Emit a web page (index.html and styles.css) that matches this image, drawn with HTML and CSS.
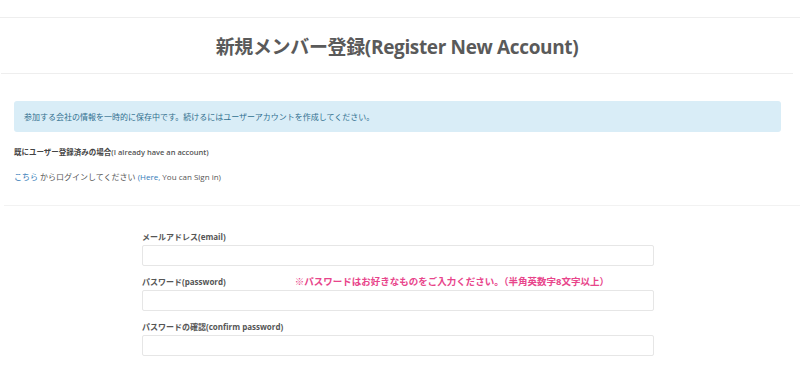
FILE: index.html
```html
<!DOCTYPE html>
<html lang="ja">
<head>
  <meta charset="UTF-8">
  <meta name="viewport" content="width=device-width, initial-scale=1.0">
  <title>新規メンバー登録</title>
  <link rel="stylesheet" href="styles.css">
</head>
<body>
  <div class="top-bar"></div>

  <div class="page-header">
    <h1>新規メンバー登録(Register New Account)</h1>
  </div>

  <main class="container">
    <div class="alert-info">参加する会社の情報を一時的に保存中です。続けるにはユーザーアカウントを作成してください。</div>

    <p class="already">既にユーザー登録済みの場合<span class="en">(I already have an account)</span></p>
    <p class="signin"><a href="#">こちら</a> からログインしてください <a href="#">(Here,</a> You can Sign in)</p>
  </main>

  <hr class="divider">

  <form class="register-form">
    <div class="field">
      <label for="email">メールアドレス(email)</label>
      <input type="email" id="email">
    </div>
    <div class="field">
      <div class="label-row">
        <label for="password">パスワード(password)</label>
        <span class="note">※パスワードはお好きなものをご入力ください。（半角英数字8文字以上）</span>
      </div>
      <input type="password" id="password">
    </div>
    <div class="field">
      <label for="confirm">パスワードの確認(confirm password)</label>
      <input type="password" id="confirm">
    </div>
  </form>
</body>
</html>
```

FILE: styles.css
```css
body {
  font-family: 'Open Sans', 'Noto Sans CJK JP', sans-serif;
  margin: 0;
  padding: 0;
  background-color: #fff;
  color: #555;
}
.top-bar {
  height: 17px;
  border-bottom: 1px solid #eee;
}
.page-header {
  height: 55px;
  margin: 0 7px 0 1px;
  border-bottom: 1px solid #eee;
  display: flex;
  align-items: center;
  justify-content: center;
}
h1 {
  margin: 0;
  font-size: 19px;
  font-weight: 700;
  color: #5a5a5a;
  letter-spacing: -0.35px;
}
.container {
  padding: 27px 19px 0 14px;
}
.alert-info {
  background-color: #d9edf7;
  color: #31708f;
  border-radius: 3px;
  height: 31px;
  display: flex;
  align-items: center;
  padding: 0 10px;
  font-size: 8px;
}
.already {
  margin: 14px 0 0;
  font-size: 7.5px;
  font-weight: 700;
  color: #444;
  line-height: 12px;
}
.already .en {
  font-weight: 600;
  color: #555;
}
.signin {
  margin: 13px 0 0;
  font-size: 8px;
  color: #555;
  line-height: 12px;
}
.signin a {
  color: #337ab7;
  text-decoration: none;
}
.divider {
  border: none;
  border-top: 1px solid #f2f2f2;
  margin: 22px 0 0 4px;
}
.register-form {
  width: 512px;
  margin: 25px 0 0 142px;
}
.field {
  display: flex;
  flex-direction: column;
  margin-bottom: 10px;
}
.label-row {
  display: flex;
  align-items: center;
}
label {
  font-size: 8px;
  font-weight: 700;
  color: #555;
  line-height: 12px;
  margin-bottom: 2px;
}
.note {
  margin-left: 69px;
  font-size: 9.5px;
  font-weight: 700;
  color: #e8458b;
  line-height: 12px;
  margin-bottom: 2px;
}
input {
  height: 21px;
  box-sizing: border-box;
  border: 1px solid #e6e6e6;
  border-radius: 2px;
  padding: 0 6px;
  font-size: 9px;
}
```
